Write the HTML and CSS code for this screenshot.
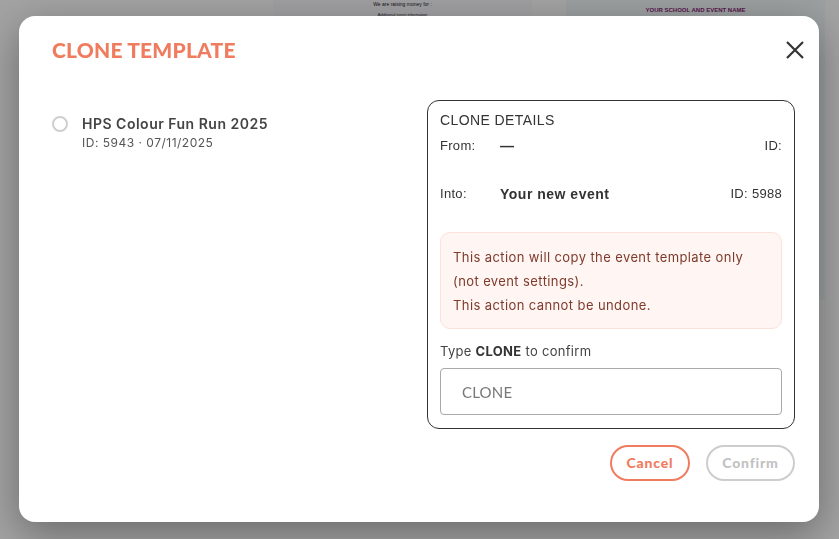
FILE: index.html
```html
<!DOCTYPE html>
<html lang="en">
<head>
    <meta charset="UTF-8">
    <title>Clone Template</title>
    <link rel="stylesheet" href="styles.css">
</head>
<body>
    <!-- page behind the dialog -->
    <div class="page">
        <div class="card">
            <p class="card-line">We are raising money for :</p>
            <p class="card-small">Additional event information</p>
        </div>
        <div class="card card-alt">
            <p class="card-head">YOUR SCHOOL AND EVENT NAME</p>
        </div>
    </div>

    <div class="overlay">
        <div class="modal">
            <div class="modal-header">
                <h1 class="modal-title">CLONE TEMPLATE</h1>
                <button class="close-button" aria-label="Close">
                    <svg width="20" height="20" viewBox="0 0 20 20">
                        <path d="M2 2 L18 18 M18 2 L2 18" stroke="#333" stroke-width="2.2" fill="none"/>
                    </svg>
                </button>
            </div>

            <div class="modal-body">
                <div class="templates">
                    <label class="template">
                        <span class="radio"></span>
                        <span class="template-info">
                            <span class="template-name">HPS Colour Fun Run 2025</span>
                            <span class="template-meta">ID: 5943 · 07/11/2025</span>
                        </span>
                    </label>
                </div>

                <div class="details">
                    <h3 class="details-title">CLONE DETAILS</h3>
                    <div class="detail-row">
                        <span class="detail-label">From:</span>
                        <span class="detail-value strong">—</span>
                        <span class="detail-id">ID:</span>
                    </div>
                    <div class="detail-row detail-into">
                        <span class="detail-label">Into:</span>
                        <span class="detail-value strong">Your new event</span>
                        <span class="detail-id">ID: 5988</span>
                    </div>

                    <div class="warning">
                        This action will copy the event template only<br>
                        (not event settings).<br>
                        This action cannot be undone.
                    </div>

                    <p class="confirm-label">Type <b>CLONE</b> to confirm</p>
                    <input class="confirm-input" type="text" placeholder="CLONE">
                </div>
            </div>

            <div class="modal-footer">
                <button class="btn btn-cancel">Cancel</button>
                <button class="btn btn-confirm" disabled>Confirm</button>
            </div>
        </div>
    </div>
</body>
</html>
```

FILE: styles.css
```css
body {
    margin: 0;
    font-family: 'Inter', sans-serif;
    background: #fff;
    overflow: hidden;
    height: 539px;
}

.page {
    display: flex;
    gap: 34px;
    padding-left: 273px;
}

.card {
    width: 259px;
    height: 300px;
    background: #fbfbff;
    text-align: center;
    font-family: 'Liberation Sans', sans-serif;
}

.card-alt {
    background: #f4fafa;
}

.card-line {
    margin: 0;
    padding-top: 1px;
    font-size: 5px;
    color: #222;
}

.card-small {
    margin: 5px 0 0;
    font-size: 4px;
    color: #333;
}

.card-head {
    margin: 0;
    padding-top: 7px;
    font-size: 6px;
    font-weight: bold;
    color: #8b1f78;
}

.overlay {
    position: fixed;
    top: 0;
    left: 0;
    width: 100%;
    height: 100%;
    background: rgba(0,0,0,0.365);
}

.modal {
    position: absolute;
    top: 16px;
    left: 19px;
    width: 800px;
    height: 506px;
    box-sizing: border-box;
    background: #fff;
    border-radius: 16px;
    padding: 22px 24px 0 33px;
    box-shadow: 0 12px 40px rgba(0,0,0,0.35);
}

.modal-header {
    display: flex;
    justify-content: space-between;
    align-items: center;
    height: 24px;
    margin-bottom: 38px;
}

.modal-title {
    margin: 0;
    font-family: 'Lato', sans-serif;
    font-weight: 900;
    font-size: 21px;
    line-height: 24px;
    letter-spacing: 0.2px;
    color: #f07c5f;
}

.close-button {
    border: none;
    background: none;
    padding: 0;
    width: 20px;
    height: 20px;
    margin-right: -10px;
    cursor: pointer;
}

.modal-body {
    display: grid;
    grid-template-columns: 1fr 368px;
}

.template {
    display: flex;
    gap: 14px;
    padding-top: 15px;
    cursor: pointer;
}

.radio {
    width: 12px;
    height: 12px;
    border: 2px solid #cfcfcf;
    border-radius: 50%;
    margin-top: 1px;
}

.template-info {
    display: flex;
    flex-direction: column;
    gap: 3px;
}

.template-name {
    font-size: 14px;
    font-weight: 600;
    color: #444;
    letter-spacing: 0.5px;
}

.template-meta {
    font-size: 12px;
    color: #555;
    letter-spacing: 0.5px;
}

.details {
    border: 1px solid #333;
    border-radius: 12px;
    padding: 10px 12px 13px 12px;
}

.details-title {
    margin: 0 0 8px;
    font-family: 'Liberation Sans', sans-serif;
    font-weight: normal;
    font-size: 14px;
    line-height: 18px;
    letter-spacing: 0.4px;
    color: #333;
}

.detail-row {
    display: flex;
    align-items: center;
    font-family: 'Liberation Sans', sans-serif;
    font-size: 13px;
    line-height: 18px;
    letter-spacing: 0.3px;
    color: #333;
}

.detail-into {
    margin-top: 30px;
}

.detail-label {
    width: 60px;
}

.detail-value {
    flex: 1;
}

.detail-value.strong {
    font-weight: bold;
    font-size: 14px;
    letter-spacing: 0.5px;
}

.warning {
    margin-top: 29px;
    background: #fff5f3;
    border: 1px solid #fbe2da;
    border-radius: 10px;
    padding: 12px 12px 11px 12px;
    font-size: 13px;
    line-height: 24px;
    letter-spacing: 0.4px;
    color: #7e3a2a;
}

.confirm-label {
    margin: 13px 0 8px;
    font-size: 13px;
    line-height: 18px;
    color: #444;
    letter-spacing: 0.3px;
}

.confirm-label b {
    color: #333;
}

.confirm-input {
    display: block;
    width: 100%;
    height: 47px;
    box-sizing: border-box;
    border: 1px solid #a9a9a9;
    border-radius: 4px;
    padding: 0 21px;
    font-family: 'Lato', sans-serif;
    font-size: 15px;
    letter-spacing: 0.2px;
    outline: none;
}

.confirm-input::placeholder {
    color: #777;
}

.modal-footer {
    display: flex;
    justify-content: flex-end;
    gap: 16px;
    margin-top: 16px;
}

.btn {
    height: 36px;
    padding: 0 0 2px;
    border-radius: 18px;
    background: #fff;
    font-family: 'Lato', sans-serif;
    font-weight: 900;
    font-size: 14px;
    letter-spacing: 0.8px;
    cursor: pointer;
}

.btn-cancel {
    width: 80px;
    border: 2px solid #f07c5f;
    color: #f07c5f;
}

.btn-confirm {
    width: 89px;
    border: 2px solid #cdcdcd;
    color: #c2c2c2;
}
```
